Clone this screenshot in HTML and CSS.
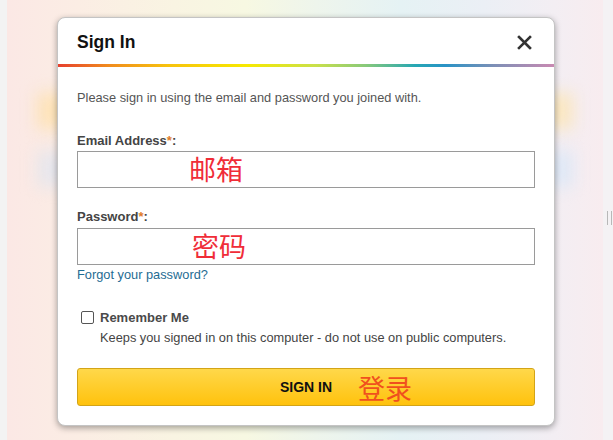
FILE: index.html
```html
<!DOCTYPE html>
<html>
<head>
<meta charset="utf-8">
<link rel="stylesheet" href="styles.css">
</head>
<body>
<div class="page">
  <div class="strip left"></div>
  <div class="main">
    <div class="blob yellow"></div>
    <div class="blob blue"></div>
    <div class="dialog">
      <div class="header">
        <h1 class="title">Sign In</h1>
        <svg class="close" width="15" height="15" viewBox="0 0 15 15"><path d="M2 2 L13 13 M13 2 L2 13" stroke="#333" stroke-width="2.6" stroke-linecap="square"/></svg>
      </div>
      <div class="rainbow"></div>
      <div class="body">
        <p class="intro">Please sign in using the email and password you joined with.</p>
        <div class="label">Email Address<span class="req">*</span>:</div>
        <div class="field"><span class="note email">邮箱</span></div>
        <div class="label pw">Password<span class="req">*</span>:</div>
        <div class="field pwfield"><span class="note password">密码</span></div>
        <a class="forgot">Forgot your password?</a>
        <div class="remember">
          <span class="box"></span>
          <div class="rtext">
            <div class="rtitle">Remember Me</div>
            <div class="rdesc">Keeps you signed in on this computer - do not use on public computers.</div>
          </div>
        </div>
        <div class="button">SIGN IN<span class="note login">登录</span></div>
      </div>
    </div>
  </div>
  <div class="strip right"><span class="grip"></span></div>
</div>
</body>
</html>
```
FILE: styles.css
```css
html, body {
  margin: 0;
  padding: 0;
  width: 613px;
  height: 440px;
  overflow: hidden;
  font-family: "Liberation Sans", Arial, sans-serif;
}
.page {
  display: flex;
  width: 613px;
  height: 440px;
}
.strip {
  background: #f3f3f3;
}
.strip.left {
  width: 7px;
}
.strip.right {
  width: 10px;
  background: #f4f2f4;
  display: flex;
  align-items: center;
  justify-content: center;
}
.grip {
  width: 3px;
  height: 14px;
  border-left: 1px solid #b8b8b8;
  border-right: 1px solid #b8b8b8;
  margin-left: 2px;
  margin-bottom: 4px;
}
.main {
  position: relative;
  flex: 1;
  background: linear-gradient(to right, #fbe8e5 0%, #fbede4 12%, #f9f4e2 28%, #f7f8e2 40%, #eef5ec 52%, #e5f2f4 66%, #ebeff5 80%, #f3eef3 92%, #f8ecef 100%);
  padding-top: 93px;
  overflow: hidden;
}
.blob {
  height: 36px;
  margin: 0 30px;
  filter: blur(8px);
}
.blob.yellow {
  background: linear-gradient(to right, #fde2b8, #fdeec4 30%, #f6f3d0 50%, #eef2e2 70%, #fbe6bf 100%);
}
.blob.blue {
  margin-top: 22px;
  background: linear-gradient(to right, #e7e6ec, #e8ecf3 50%, #dfe8f6 100%);
}
.dialog {
  position: absolute;
  left: 50px;
  top: 17px;
  width: 496px;
  height: 407px;
  background: #fff;
  border: 1px solid #c4c4c4;
  border-radius: 8px;
  box-shadow: 0 2px 6px rgba(0, 0, 0, 0.35);
  overflow: hidden;
}
.header {
  height: 46px;
  display: flex;
  align-items: center;
  justify-content: space-between;
  padding: 0 22px 0 19px;
}
.title {
  margin: 0;
  font-size: 17.5px;
  font-weight: bold;
  color: #111;
  padding-top: 2px;
}
.close {
  display: block;
  margin-top: 2px;
}
.rainbow {
  height: 3px;
  background: linear-gradient(to right, #e6402e 0%, #f08a1e 10%, #f7c20e 22%, #f7e900 38%, #c9e04a 52%, #88c97a 62%, #26a7b4 72%, #2993c6 78%, #7e8fb6 88%, #c98ab2 100%);
}
.body {
  padding: 0 19px;
}
.intro {
  margin: 23px 0 0;
  font-size: 12.8px;
  color: #555;
  line-height: 16px;
}
.label {
  margin-top: 27px;
  font-size: 13px;
  font-weight: bold;
  color: #444;
  line-height: 15px;
}
.label.pw {
  margin-top: 21px;
}
.req {
  color: #e07b2a;
}
.field {
  margin-top: 3px;
  height: 35px;
  border: 1px solid #9a9a9a;
  position: relative;
}
.field.pwfield {
  margin-top: 4px;
}
.note {
  position: absolute;
  font-family: "Noto Sans CJK SC", sans-serif;
  font-size: 27px;
  line-height: 30px;
  color: #f02d38;
  font-weight: normal;
}
.note.email {
  left: 111px;
  top: 2px;
}
.note.password {
  left: 114px;
  top: 2px;
}
.forgot {
  display: block;
  margin-top: 2px;
  font-size: 12.8px;
  line-height: 15px;
  color: #1f6c93;
}
.remember {
  display: flex;
  margin-top: 28px;
  padding-left: 4px;
}
.box {
  width: 11px;
  height: 11px;
  border: 1px solid #555;
  border-radius: 2px;
  margin-top: 1px;
  margin-right: 6px;
  flex-shrink: 0;
}
.rtitle {
  font-size: 13px;
  color: #4a4a4a;
  font-weight: bold;
  line-height: 16px;
}
.rdesc {
  margin-top: 4px;
  font-size: 12.8px;
  color: #444;
  line-height: 15px;
}
.button {
  position: relative;
  margin-top: 23px;
  height: 36px;
  border: 1px solid #d3a417;
  border-radius: 3px;
  background: linear-gradient(to bottom, #ffd84a, #ffc20d);
  font-size: 14px;
  font-weight: bold;
  color: #111;
  text-align: center;
  line-height: 36px;
}
.note.login {
  left: 280px;
  top: 4px;
  color: #f0501e;
}
```
